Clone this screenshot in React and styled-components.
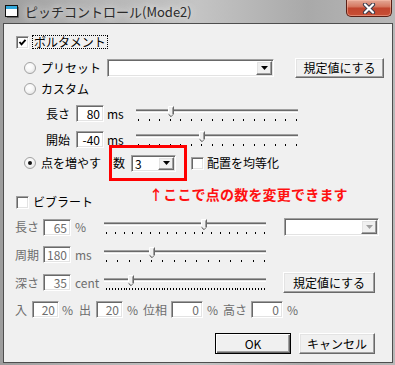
import React from 'react';
import styled, { createGlobalStyle, css } from 'styled-components';

const Global = createGlobalStyle`
  html, body { margin: 0; padding: 0; background: #b0b0b0; }
  body { font-family: "Noto Sans CJK JP", "Noto Sans", sans-serif; font-size: 12px; }
  #root { width: 395px; height: 365px; overflow: hidden; }
`;

const Window = styled.div`
  width: 395px;
  height: 365px;
  box-sizing: border-box;
  display: flex;
  flex-direction: column;
  padding: 0 2px 2px 3px;
  background: linear-gradient(90deg, #9d9d9d 0%, #b3b3b3 22%, #c4c4c4 50%, #a9a9a9 78%, #b8b8b8 100%);
`;

const TitleBar = styled.div`
  height: 23px;
  flex: none;
  display: flex;
  align-items: center;
`;

const TitleIcon = styled.svg`
  margin-left: 2px;
  flex: none;
`;

const TitleText = styled.span`
  margin-left: 6px;
  font-size: 13px;
  line-height: 16px;
  color: #2a2a2a;
  text-shadow: 0 0 6px #e6e6e6, 0 0 10px #e6e6e6;
  white-space: nowrap;
`;

const CloseButton = styled.div`
  margin-left: auto;
  margin-right: 1px;
  align-self: flex-start;
  width: 46px;
  height: 17px;
  box-sizing: border-box;
  border: 1px solid #5a2016;
  border-top: none;
  border-radius: 0 0 5px 5px;
  background: linear-gradient(#e4a896 0%, #d67a63 40%, #c1452e 52%, #c85036 100%);
  box-shadow: inset 0 0 0 1px rgba(255, 200, 180, 0.45);
  display: flex;
  align-items: center;
  justify-content: center;
`;

const Client = styled.div`
  flex: 1;
  position: relative;
  background: #f0f0f0;
  border: 1px solid #4e4e4e;
  display: flex;
  flex-direction: column;
  color: #000;
`;

const Row = styled.div`
  display: flex;
  align-items: center;
  flex: none;
  height: ${(p) => p.$h}px;
  margin-top: ${(p) => p.$mt}px;
  padding-left: ${(p) => p.$pl || 0}px;
`;

const Label = styled.span`
  display: inline-block;
  flex: none;
  white-space: nowrap;
  line-height: 14px;
  width: ${(p) => (p.$w ? `${p.$w}px` : 'auto')};
  margin-left: ${(p) => p.$ml || 0}px;
  color: ${(p) => (p.$disabled ? '#6d6d6d' : '#000')};
`;

const FocusLabel = styled.span`
  margin-left: 3px;
  padding: 0 1px;
  line-height: 12px;
  border: 1px dotted #000;
  white-space: nowrap;
`;

const sunken = css`
  border: 1px solid;
  border-color: #a0a0a0 #fff #fff #a0a0a0;
  box-shadow: inset 1px 1px #696969, inset -1px -1px #e3e3e3;
`;

const raised = css`
  border: 1px solid;
  border-color: #fff #696969 #696969 #fff;
  box-shadow: inset -1px -1px #a0a0a0, inset 1px 1px #e3e3e3;
`;

const CheckBox = styled.span`
  width: 13px;
  height: 13px;
  flex: none;
  box-sizing: border-box;
  margin-left: ${(p) => p.$ml || 0}px;
  ${sunken};
  background: #fff;
  display: flex;
  align-items: center;
  justify-content: center;
`;

const Radio = styled.span`
  width: 12px;
  height: 12px;
  flex: none;
  box-sizing: border-box;
  border-radius: 50%;
  border: 1px solid #a2a2a2;
  background: radial-gradient(circle at 40% 35%, #fff 0%, #f6f6f6 45%, #d8d8d8 100%);
  display: flex;
  align-items: center;
  justify-content: center;
  &::after {
    content: '';
    width: 4px;
    height: 4px;
    border-radius: 50%;
    background: ${(p) => (p.$checked ? '#111' : 'transparent')};
  }
`;

const NumBox = styled.span`
  width: ${(p) => p.$w}px;
  height: 17px;
  flex: none;
  box-sizing: border-box;
  margin-left: ${(p) => p.$ml || 0}px;
  ${sunken};
  background: #fff;
  color: ${(p) => (p.$disabled ? '#6d6d6d' : '#000')};
  text-align: right;
  padding-right: 3px;
  line-height: 15px;
`;

const Combo = styled.div`
  width: ${(p) => p.$w}px;
  height: ${(p) => p.$h || 18}px;
  flex: none;
  box-sizing: border-box;
  margin-left: ${(p) => p.$ml || 0}px;
  ${sunken};
  background: #fff;
  display: flex;
  padding: 1px;
`;

const ComboText = styled.span`
  flex: 1;
  padding-left: 2px;
  line-height: 13px;
`;

const ComboButton = styled.span`
  width: 16px;
  flex: none;
  box-sizing: border-box;
  ${raised};
  background: #f0f0f0;
  display: flex;
  align-items: center;
  justify-content: center;
`;

const Button = styled.button`
  width: ${(p) => p.$w}px;
  height: ${(p) => p.$h || 21}px;
  flex: none;
  margin-left: ${(p) => p.$ml || 0}px;
  align-self: ${(p) => p.$self || 'center'};
  padding: 0;
  font-family: inherit;
  font-size: 12px;
  color: #000;
  background: #f0f0f0;
  ${raised};
  ${(p) =>
    p.$default &&
    css`
      border-color: #000;
      box-shadow: inset 1px 1px #fff, inset -1px -1px #696969, inset -2px -2px #a0a0a0;
    `}
`;

const SliderBox = styled.div`
  width: ${(p) => p.$w}px;
  flex: none;
  align-self: stretch;
  box-sizing: border-box;
  margin-left: ${(p) => p.$ml || 0}px;
  padding-top: ${(p) => p.$t}px;
  display: flex;
  flex-direction: column;
`;

const Track = styled.div`
  position: relative;
  height: 4px;
  background: linear-gradient(#a0a0a0 0 1px, #696969 1px 2px, #e3e3e3 2px 3px, #fff 3px 4px);
`;

const ThumbSvg = styled.svg`
  position: absolute;
  top: -3px;
`;

const Ticks = styled.div`
  display: flex;
  justify-content: space-between;
  height: 2px;
  margin-top: 6px;
  padding: 0 1px 0 2px;
`;

const Tick = styled.span`
  width: 1px;
  height: 2px;
  background: #000;
`;

const CountGroup = styled.div`
  position: relative;
  display: flex;
  align-items: center;
  &::before {
    content: '';
    position: absolute;
    top: -10px;
    bottom: -9px;
    left: -4px;
    right: -11px;
    border: 3px solid #ff0000;
    pointer-events: none;
  }
`;

const Annotation = styled.div`
  position: absolute;
  left: 145px;
  top: 162px;
  color: #ff1010;
  font-weight: bold;
  font-size: 14px;
  line-height: 16px;
  letter-spacing: 0.2px;
  white-space: nowrap;
`;

const Arrow = () => (
  <svg width="7" height="4" viewBox="0 0 7 4">
    <polygon points="0,0 7,0 3.5,4" fill="#000" />
  </svg>
);

const GrayArrow = () => (
  <svg width="7" height="4" viewBox="0 0 7 4">
    <polygon points="0,0 7,0 3.5,4" fill="#a0a0a0" />
  </svg>
);

const Check = () => (
  <svg width="9" height="9" viewBox="0 0 9 9">
    <polyline points="1.5,4 3.5,6.3 7.5,1.8" fill="none" stroke="#000" strokeWidth="1.9" />
  </svg>
);

const Slider = ({ w, ml, t, pos, ticks }) => (
  <SliderBox $w={w} $ml={ml} $t={t}>
    <Track>
      <ThumbSvg width="6" height="11" viewBox="0 0 6 11" style={{ left: pos }}>
        <polygon points="0,0 6,0 6,8 3,11 0,8" fill="#f0f0f0" />
        <polyline points="0.5,8.5 0.5,0.5 5.5,0.5" fill="none" stroke="#fff" />
        <polyline points="5.5,0.5 5.5,8.2 3,10.6" fill="none" stroke="#696969" />
        <polyline points="4.5,1.5 4.5,8" fill="none" stroke="#a0a0a0" />
        <polyline points="0.5,8.2 3,10.6" fill="none" stroke="#404040" />
      </ThumbSvg>
    </Track>
    <Ticks>
      {Array.from({ length: ticks }, (_, i) => (
        <Tick key={i} />
      ))}
    </Ticks>
  </SliderBox>
);

export default function App() {
  return (
    <>
      <Global />
      <Window>
        <TitleBar>
          <TitleIcon width="14" height="13" viewBox="0 0 14 13">
            <rect x="0.5" y="0.5" width="12" height="11" fill="#fff" stroke="#111" />
            <rect x="1" y="1" width="11" height="3" fill="#33a9dc" />
            <path d="M13.5 2 V12.5 H2" fill="none" stroke="#666" />
          </TitleIcon>
          <TitleText>ピッチコントロール(Mode2)</TitleText>
          <CloseButton>
            <svg width="14" height="11" viewBox="0 0 14 11">
              <path d="M3 1.5 L11 9.5 M11 1.5 L3 9.5" stroke="#3a3a4a" strokeWidth="4.2" strokeLinecap="round" />
              <path d="M3 1.5 L11 9.5 M11 1.5 L3 9.5" stroke="#fff" strokeWidth="2.2" strokeLinecap="round" />
            </svg>
          </CloseButton>
        </TitleBar>

        <Client>
          <Row $h={16} $mt={10} $pl={12}>
            <CheckBox>
              <Check />
            </CheckBox>
            <FocusLabel>ポルタメント</FocusLabel>
          </Row>

          <Row $h={21} $mt={7} $pl={20}>
            <Radio />
            <Label $ml={5} $w={66}>プリセット</Label>
            <Combo $w={167}>
              <ComboText />
              <ComboButton>
                <Arrow />
              </ComboButton>
            </Combo>
            <Button $w={89} $h={20} $ml={21}>規定値にする</Button>
          </Row>

          <Row $h={16} $mt={3} $pl={20}>
            <Radio />
            <Label $ml={5}>カスタム</Label>
          </Row>

          <Row $h={19} $mt={7} $pl={42}>
            <Label $w={30}>長さ</Label>
            <NumBox $w={28}>80</NumBox>
            <Label $ml={3} $w={29}>ms</Label>
            <Slider w={162} t={5} pos={32} ticks={16} />
          </Row>

          <Row $h={19} $mt={7} $pl={42}>
            <Label $w={30}>開始</Label>
            <NumBox $w={28}>-40</NumBox>
            <Label $ml={3} $w={29}>ms</Label>
            <Slider w={162} t={4} pos={63} ticks={16} />
          </Row>

          <Row $h={18} $mt={5} $pl={20}>
            <Radio $checked />
            <Label $ml={5} $w={72}>点を増やす</Label>
            <CountGroup>
              <Label $w={18}>数</Label>
              <Combo $w={45} $h={17}>
                <ComboText>3</ComboText>
                <ComboButton>
                  <Arrow />
                </ComboButton>
              </Combo>
            </CountGroup>
            <CheckBox $ml={15} />
            <Label $ml={3}>配置を均等化</Label>
          </Row>

          <Row $h={16} $mt={22} $pl={12}>
            <CheckBox />
            <Label $ml={4}>ビブラート</Label>
          </Row>

          <Row $h={18} $mt={8} $pl={11}>
            <Label $w={28} $disabled>長さ</Label>
            <NumBox $w={28} $disabled>65</NumBox>
            <Label $ml={4} $w={29} $disabled>%</Label>
            <Slider w={162} t={4} pos={97} ticks={19} />
            <Combo $w={95} $ml={18}>
              <ComboText />
              <ComboButton>
                <GrayArrow />
              </ComboButton>
            </Combo>
          </Row>

          <Row $h={19} $mt={9} $pl={11}>
            <Label $w={28} $disabled>周期</Label>
            <NumBox $w={28} $disabled>180</NumBox>
            <Label $ml={4} $w={29} $disabled>ms</Label>
            <Slider w={162} t={5} pos={45} ticks={15} />
          </Row>

          <Row $h={21} $mt={8} $pl={11}>
            <Label $w={28} $disabled>深さ</Label>
            <NumBox $w={28} $disabled>35</NumBox>
            <Label $ml={4} $w={29} $disabled>cent</Label>
            <Slider w={162} t={6} pos={24} ticks={55} />
            <Button $w={92} $ml={17}>規定値にする</Button>
          </Row>

          <Row $h={19} $mt={7} $pl={11}>
            <Label $w={17} $disabled>入</Label>
            <NumBox $w={27} $disabled>20</NumBox>
            <Label $ml={3} $w={17} $disabled>%</Label>
            <Label $w={17} $disabled>出</Label>
            <NumBox $w={27} $disabled>20</NumBox>
            <Label $ml={4} $w={16} $disabled>%</Label>
            <Label $w={28} $disabled>位相</Label>
            <NumBox $w={32} $disabled>0</NumBox>
            <Label $ml={4} $w={16} $disabled>%</Label>
            <Label $w={28} $disabled>高さ</Label>
            <NumBox $w={32} $disabled>0</NumBox>
            <Label $ml={4} $disabled>%</Label>
          </Row>

          <Row $h={21} $mt={14} $pl={211}>
            <Button $w={76} $default>OK</Button>
            <Button $w={76} $ml={8}>キャンセル</Button>
          </Row>

          <Annotation>↑ここで点の数を変更できます</Annotation>
        </Client>
      </Window>
    </>
  );
}
